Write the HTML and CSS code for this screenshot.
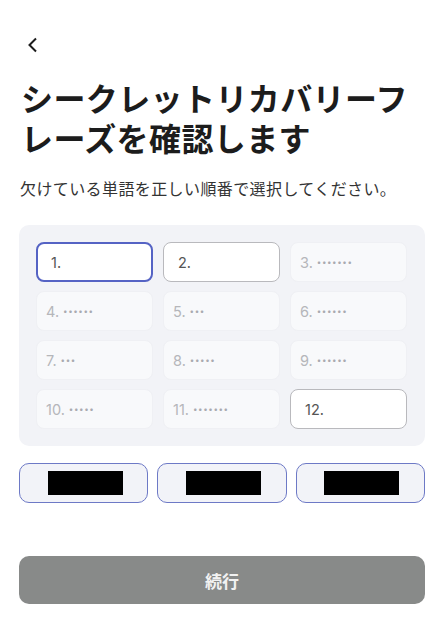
FILE: index.html
```html
<!DOCTYPE html>
<html lang="ja">

<head>
    <meta charset="utf-8">
    <title>シークレットリカバリーフレーズを確認します</title>
    <link rel="stylesheet" href="styles.css">
</head>

<body>
    <div class="page">
        <button class="back" aria-label="戻る">
            <svg width="12" height="16" viewBox="0 0 12 16">
                <polyline points="9,1.5 2.5,8 9,14.5" fill="none" stroke="#1c1c1c" stroke-width="2" />
            </svg>
        </button>

        <h1 class="title">シークレットリカバリーフレーズを確認します</h1>
        <p class="subtitle">欠けている単語を正しい順番で選択してください。</p>

        <!-- Word grid -->
        <div class="words">
            <div class="word active">1.</div>
            <div class="word open">2.</div>
            <div class="word hidden">3. <span class="dots">•••••••</span></div>
            <div class="word hidden">4. <span class="dots">••••••</span></div>
            <div class="word hidden">5. <span class="dots">•••</span></div>
            <div class="word hidden">6. <span class="dots">••••••</span></div>
            <div class="word hidden">7. <span class="dots">•••</span></div>
            <div class="word hidden">8. <span class="dots">•••••</span></div>
            <div class="word hidden">9. <span class="dots">••••••</span></div>
            <div class="word hidden">10. <span class="dots">•••••</span></div>
            <div class="word hidden">11. <span class="dots">•••••••</span></div>
            <div class="word open">12.</div>
        </div>

        <!-- Choices -->
        <div class="choices">
            <button class="choice"><span class="redacted"></span></button>
            <button class="choice"><span class="redacted"></span></button>
            <button class="choice"><span class="redacted"></span></button>
        </div>

        <button class="continue" disabled>続行</button>
    </div>
</body>

</html>
```

FILE: styles.css
```css
body {
    margin: 0;
    background: #fff;
    color: #1c1c1c;
    font-family: Inter, "Noto Sans CJK JP", sans-serif;
}

.page {
    padding: 33px 15px 0 19px;
}

.back {
    display: flex;
    align-items: center;
    height: 24px;
    padding: 0 0 0 8px;
    border: none;
    background: none;
    cursor: pointer;
}

/* Heading */
.title {
    margin: 20px 0 0 2px;
    font-family: "Noto Sans CJK JP", sans-serif;
    font-size: 32px;
    line-height: 40px;
    font-weight: 700;
    letter-spacing: 0.4px;
}

.subtitle {
    margin: 19px 0 0 1px;
    font-family: "Noto Sans CJK JP", sans-serif;
    font-size: 16px;
    line-height: 24px;
    letter-spacing: 0.4px;
    color: #333;
}

/* Word grid */
.words {
    margin-top: 25px;
    padding: 17px 18px 17px 17px;
    background: #f2f3f7;
    border-radius: 10px;
    display: grid;
    grid-template-columns: repeat(3, 1fr);
    gap: 9px 10px;
}

.word {
    box-sizing: border-box;
    height: 40px;
    display: flex;
    align-items: center;
    gap: 4px;
    padding-left: 14px;
    border-radius: 8px;
    font-size: 14.5px;
    color: #555;
}

.word.active {
    background: #fff;
    border: 2px solid #5563c4;
    padding-left: 13px;
}

.word.open {
    background: #fff;
    border: 1px solid #b9b9bd;
}

.word.hidden {
    background: #f8f9fb;
    border: 1px solid #eff0f4;
    padding-left: 9px;
    color: #b5b6ba;
}

.dots {
    font-size: 8px;
    letter-spacing: 0.6px;
    color: #a9aab0;
}

/* Choices */
.choices {
    margin-top: 17px;
    display: grid;
    grid-template-columns: repeat(3, 1fr);
    gap: 9px;
}

.choice {
    height: 40px;
    display: flex;
    align-items: center;
    justify-content: center;
    background: #f2f3f8;
    border: 1px solid #6d79c6;
    border-radius: 10px;
    padding: 0 0 0 3px;
    cursor: pointer;
}

.redacted {
    display: block;
    width: 75px;
    height: 24px;
    background: #000;
}

/* Continue */
.continue {
    display: block;
    width: 100%;
    height: 48px;
    margin-top: 53px;
    border: none;
    border-radius: 10px;
    background: #888a89;
    color: #f2f2f2;
    font-family: "Noto Sans CJK JP", sans-serif;
    font-size: 17px;
    font-weight: 700;
}
```
